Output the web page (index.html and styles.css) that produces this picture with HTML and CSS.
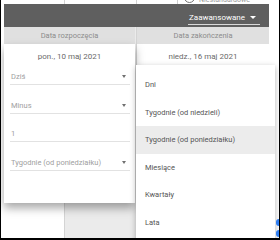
FILE: index.html
```html
<!DOCTYPE html>
<html lang="pl">
<head>
<meta charset="utf-8">
<link rel="stylesheet" href="styles.css">
</head>
<body>
<div class="frame">
  <div class="backdrop">
    <div class="col col-a"></div>
    <div class="col col-b"></div>
    <div class="col col-c">
      <div class="legend"><span class="radio"></span><span class="legend-text">Niestandardowe</span></div>
    </div>
  </div>

  <div class="picker">
    <div class="bar">
      <div class="adv"><span>Zaawansowane</span><span class="caret"></span></div>
    </div>
    <div class="cols">
      <div class="col-left">
        <div class="head">Data rozpoczęcia</div>
        <div class="card">
          <div class="date">pon., 10 maj 2021</div>
          <div class="fields">
            <div class="field"><span>Dziś</span><span class="arrow"></span></div>
            <div class="field"><span>Minus</span><span class="arrow"></span></div>
            <div class="field"><span>1</span></div>
            <div class="field"><span>Tygodnie (od poniedziałku)</span><span class="arrow"></span></div>
          </div>
        </div>
      </div>
      <div class="col-right">
        <div class="head">Data zakończenia</div>
        <div class="date">niedz., 16 maj 2021</div>
      </div>
    </div>
  </div>

  <div class="menu">
    <div class="item">Dni</div>
    <div class="item">Tygodnie (od niedzieli)</div>
    <div class="item active">Tygodnie (od poniedziałku)</div>
    <div class="item">Miesiące</div>
    <div class="item">Kwartały</div>
    <div class="item">Lata</div>
  </div>

  <div class="blue b1"></div>
  <div class="blue b2"></div>
</div>
</body>
</html>
```
FILE: styles.css
```css
* { box-sizing: border-box; margin: 0; padding: 0; }
html, body { width: 280px; height: 240px; overflow: hidden; background: #fff; }
body { font-family: Roboto, "Liberation Sans", sans-serif; }

.frame {
  position: relative;
  width: 280px;
  height: 240px;
  border-left: 1px solid #000;
  border-right: 1px solid #000;
  border-bottom: 2px solid #000;
  overflow: hidden;
  background: #fff;
}

/* background report table */
.backdrop {
  display: grid;
  grid-template-columns: 64px 72px 1fr;
  height: 100%;
}
.col-a { border-right: 1px solid #d4d4d4; }
.col-b { border-right: 1px solid #d4d4d4; background: linear-gradient(#fff 0 4px, #ebebeb 4px); }
.legend {
  margin-left: 40px;
  height: 4px;
  overflow: hidden;
  display: flex;
  align-items: flex-end;
  gap: 4px;
  border-left: 1px solid #cfcfcf;
  padding-left: 6px;
}
.radio {
  width: 11px; height: 11px;
  border: 1.5px solid #777;
  border-radius: 50%;
  flex: none;
  margin-bottom: 1px;
}
.legend-text { font-size: 7px; color: #999; line-height: 8px; }

/* date range picker */
.picker {
  position: absolute;
  left: 3px;
  top: 4px;
  width: 265px;
}
.bar {
  height: 23px;
  background: #5f5f5f;
  display: flex;
  justify-content: flex-end;
  align-items: center;
  padding-right: 9px;
}
.adv {
  width: 72px;
  display: flex;
  justify-content: space-between;
  align-items: center;
  color: #fff;
  font-size: 8px;
  line-height: 11px;
  border-bottom: 1px solid #d8d8d8;
  padding: 2px 4px 1px 1px;
  margin-top: 3px;
}
.caret {
  width: 0; height: 0;
  border-left: 3px solid transparent;
  border-right: 3px solid transparent;
  border-top: 3px solid #fff;
}

.cols {
  display: grid;
  grid-template-columns: 131px 132px;
  column-gap: 2px;
}
.head {
  height: 17px;
  background: #e0e0e0;
  color: #8c8c8c;
  font-size: 7.5px;
  display: flex;
  align-items: center;
  justify-content: center;
}
.date {
  height: 25px;
  display: flex;
  align-items: center;
  justify-content: center;
  color: #6a6a6a;
  font-size: 8px;
  background: #fff;
}

.card {
  background: #fff;
  height: 159px;
  box-shadow: 0 5px 9px rgba(0, 0, 0, 0.35);
  position: relative;
}
.fields {
  display: flex;
  flex-direction: column;
  gap: 12.7px;
  padding: 0 5px 0 6px;
}
.field {
  height: 16px;
  border-bottom: 1px solid #e2e2e2;
  display: flex;
  align-items: center;
  justify-content: space-between;
  padding: 0 4px 0 1px;
  font-size: 7.5px;
  color: #a0a0a0;
}
.arrow {
  width: 0; height: 0;
  border-left: 2.5px solid transparent;
  border-right: 2.5px solid transparent;
  border-top: 3px solid #707070;
}

/* dropdown menu */
.menu {
  position: absolute;
  left: 135px;
  top: 65px;
  width: 139px;
  height: 190px;
  background: #fff;
  box-shadow: 0 2px 6px rgba(0, 0, 0, 0.3);
  padding-top: 6px;
}
.item {
  height: 27.5px;
  display: flex;
  align-items: center;
  padding-left: 9px;
  font-size: 7.5px;
  color: #555;
}
.item.active { background: #ececec; }

.blue {
  position: absolute;
  right: 0;
  width: 3px;
  height: 7px;
  background: #2f7df0;
  border-radius: 3px 0 0 3px;
}
.b1 { top: 219px; }
.b2 { top: 230px; }
```
